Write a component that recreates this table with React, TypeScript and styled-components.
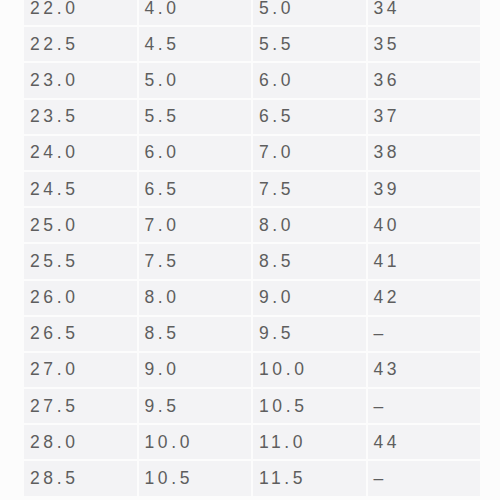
import React from 'react';
import styled, { createGlobalStyle } from 'styled-components';

const GlobalStyle = createGlobalStyle`
  html, body {
    margin: 0;
    padding: 0;
    background: #ffffff;
    overflow: hidden;
  }
`;

const Page = styled.div`
  width: 500px;
  height: 500px;
  overflow: hidden;
  background: #fcfcfc;
`;

const SizeGrid = styled.div`
  display: grid;
  grid-template-columns: repeat(4, 1fr);
  grid-auto-rows: 34.2px;
  column-gap: 2px;
  row-gap: 2px;
  width: 456px;
  margin: -9px 0 0 24px;
`;

const Cell = styled.div`
  display: flex;
  align-items: center;
  padding-left: 6px;
  background: #f3f3f5;
  color: #5e5e5e;
  font-family: "Liberation Sans", Arial, sans-serif;
  font-size: 17.5px;
  letter-spacing: 3.6px;
`;

const rows: [string, string, string, string][] = [
  ['22.0', '4.0', '5.0', '34'],
  ['22.5', '4.5', '5.5', '35'],
  ['23.0', '5.0', '6.0', '36'],
  ['23.5', '5.5', '6.5', '37'],
  ['24.0', '6.0', '7.0', '38'],
  ['24.5', '6.5', '7.5', '39'],
  ['25.0', '7.0', '8.0', '40'],
  ['25.5', '7.5', '8.5', '41'],
  ['26.0', '8.0', '9.0', '42'],
  ['26.5', '8.5', '9.5', '–'],
  ['27.0', '9.0', '10.0', '43'],
  ['27.5', '9.5', '10.5', '–'],
  ['28.0', '10.0', '11.0', '44'],
  ['28.5', '10.5', '11.5', '–'],
];

const App: React.FC = () => (
  <Page>
    <GlobalStyle />
    <SizeGrid>
      {rows.map((row, i) =>
        row.map((value, j) => <Cell key={`${i}-${j}`}>{value}</Cell>)
      )}
    </SizeGrid>
  </Page>
);

export default App;
